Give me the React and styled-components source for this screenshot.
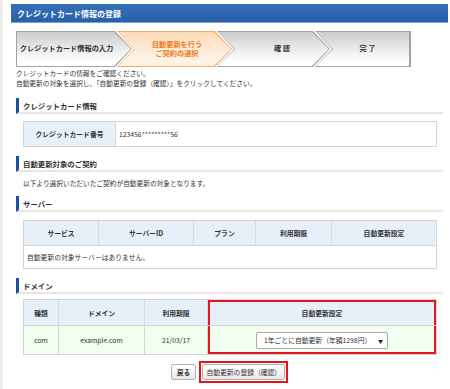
import React from "react";
import styled, { createGlobalStyle } from "styled-components";

const GlobalStyle = createGlobalStyle`
  html, body { margin: 0; padding: 0; }
  body {
    background: linear-gradient(to right, #ececec 0 3px, #fff 3px);
    font-family: "Noto Sans CJK JP", "Noto Sans", sans-serif;
    color: #333;
  }
`;

const Page = styled.div`
  width: 450px;
  height: 389px;
  box-sizing: border-box;
  padding: 4px 2px 0 11px;
  overflow: hidden;
`;

const TitleBar = styled.div`
  height: 19px;
  box-sizing: border-box;
  padding-left: 6px;
  display: flex;
  align-items: center;
  background: linear-gradient(#3670b9, #2760a8);
  border-bottom: 1px solid #78a3dc;
  color: #fff;
  font-size: 8px;
  font-weight: bold;
`;

const Content = styled.div`
  padding: 0 5px;
`;

const Stepper = styled.div`
  display: flex;
  width: 395px;
  height: 36px;
  margin-top: 8px;
`;

const shape = ({ $pos }) => {
  if ($pos === "first")
    return "polygon(0 0, calc(100% - 17px) 0, 100% 50%, calc(100% - 17px) 100%, 0 100%)";
  if ($pos === "last") return "polygon(0 0, 100% 0, 100% 100%, 0 100%, 17px 50%)";
  return "polygon(0 0, calc(100% - 17px) 0, 100% 50%, calc(100% - 17px) 100%, 0 100%, 17px 50%)";
};

const Step = styled.div`
  position: relative;
  flex: none;
  box-sizing: border-box;
  width: ${(p) => p.$w}px;
  margin-left: ${(p) => (p.$pos === "first" ? 0 : -15)}px;
  padding: 0 ${(p) => p.$pr}px 0 ${(p) => p.$pl}px;
  display: flex;
  align-items: center;
  justify-content: center;
  clip-path: ${shape};
  background: ${(p) => (p.$active ? "#f3ad66" : "#a2a2a2")};

  &::before {
    content: "";
    position: absolute;
    inset: 1px ${(p) => (p.$pos === "last" ? 2 : 1)}px 1px 1px;
    clip-path: ${shape};
    background: ${(p) =>
      p.$active
        ? "linear-gradient(#fcdcb9, #fff3e6 80%)"
        : "linear-gradient(#cdcdcd, #ffffff 85%)"};
  }
`;

const StepLabel = styled.span`
  position: relative;
  font-size: 7.2px;
  line-height: 9.5px;
  font-weight: bold;
  text-align: center;
  white-space: pre;
  color: ${(p) => (p.$active ? "#ef7a1c" : "#333")};
`;

const Intro = styled.p`
  margin: 1px 0 0;
  font-size: 6.7px;
  line-height: 10px;
`;

const Heading = styled.div`
  height: 14px;
  margin-top: ${(p) => p.$mt}px;
  display: flex;
  align-items: center;
  padding-left: 4px;
  border-left: 3px solid #1c4f9c;
  border-bottom: 2px solid #e6e6e6;
  font-size: 7.4px;
  font-weight: bold;
`;

const Note = styled.p`
  margin: 6px 0 0 7px;
  font-size: 6.7px;
  line-height: 10px;
`;

const Table = styled.table`
  width: 414px;
  margin: ${(p) => p.$mt}px 0 0 7px;
  table-layout: fixed;
  border-collapse: separate;
  border-spacing: 0;
  border-top: 1px solid #d4d4d4;
  border-left: 1px solid #d4d4d4;
  font-size: 6.8px;
`;

const Th = styled.th`
  height: ${(p) => p.$h || 24}px;
  padding: 0;
  border-right: 1px solid #d4d9e0;
  border-bottom: 1px solid #d4d4d4;
  background: #e7eff8;
  font-weight: bold;
  text-align: center;
  box-shadow: ${(p) =>
    p.$hl ? "inset 2px 2px 0 #e5151d, inset -2px 0 0 #e5151d" : "none"};
`;

const Td = styled.td`
  height: ${(p) => p.$h || 22}px;
  padding: ${(p) => (p.$left ? "0 0 0 3px" : "0")};
  border-right: 1px solid #d4d4d4;
  border-bottom: 1px solid #d4d4d4;
  background: ${(p) => (p.$green ? "#f1fdee" : "#fff")};
  text-align: ${(p) => (p.$left ? "left" : "center")};
  box-shadow: ${(p) =>
    p.$hl ? "inset 2px -2px 0 #e5151d, inset -2px 0 0 #e5151d" : "none"};
`;

const Select = styled.div`
  display: inline-flex;
  align-items: center;
  justify-content: space-between;
  box-sizing: border-box;
  width: 132px;
  height: 17px;
  padding: 0 4px 0 7px;
  border: 1px solid #a9a9a9;
  border-radius: 2px;
  background: #fff;
  font-size: 6.8px;
  vertical-align: middle;
`;

const Caret = styled.span`
  font-size: 5px;
  color: #222;
`;

const Actions = styled.div`
  display: flex;
  justify-content: center;
  align-items: center;
  gap: 3px;
  margin-top: 6px;
`;

const Highlight = styled.div`
  display: flex;
  padding: 1px;
  border: 2px solid #e5151d;
`;

const Button = styled.button`
  height: 16px;
  padding: 0 ${(p) => p.$px}px;
  border: 1px solid #b3b3b3;
  border-radius: 2px;
  background: linear-gradient(#ffffff, #e9e9e9);
  font-family: inherit;
  font-size: 6.8px;
  font-weight: ${(p) => (p.$bold ? "bold" : "normal")};
  color: #333;
  line-height: 1;
`;

const steps = [
  { label: "クレジットカード情報の入力", w: 116, pos: "first", pl: 2, pr: 17 },
  { label: "自動更新を行う\nご契約の選択", w: 115, pos: "mid", pl: 17, pr: 12, active: true },
  { label: "確 認", w: 113, pos: "mid", pl: 17, pr: 0 },
  { label: "完 了", w: 96, pos: "last", pl: 17, pr: 8 },
];

export default function App() {
  return (
    <Page>
      <GlobalStyle />
      <TitleBar>クレジットカード情報の登録</TitleBar>
      <Content>
        <Stepper>
          {steps.map((s) => (
            <Step key={s.label} $w={s.w} $pos={s.pos} $pl={s.pl} $pr={s.pr} $active={s.active}>
              <StepLabel $active={s.active}>{s.label}</StepLabel>
            </Step>
          ))}
        </Stepper>

        <Intro>
          クレジットカードの情報をご確認ください。
          <br />
          自動更新の対象を選択し、「自動更新の登録（確認）」をクリックしてください。
        </Intro>

        <Heading $mt={10}>クレジットカード情報</Heading>
        <Table $mt={7}>
          <colgroup>
            <col style={{ width: 92 }} />
            <col />
          </colgroup>
          <tbody>
            <tr>
              <Th $h={24}>クレジットカード番号</Th>
              <Td $h={24} $left>123456*********56</Td>
            </tr>
          </tbody>
        </Table>

        <Heading $mt={9}>自動更新対象のご契約</Heading>
        <Note>以下より選択いただいたご契約が自動更新の対象となります。</Note>

        <Heading $mt={8}>サーバー</Heading>
        <Table $mt={8}>
          <colgroup>
            <col style={{ width: 75 }} />
            <col style={{ width: 95 }} />
            <col style={{ width: 62 }} />
            <col style={{ width: 76 }} />
            <col />
          </colgroup>
          <thead>
            <tr>
              <Th>サービス</Th>
              <Th>サーバーID</Th>
              <Th>プラン</Th>
              <Th>利用期限</Th>
              <Th>自動更新設定</Th>
            </tr>
          </thead>
          <tbody>
            <tr>
              <Td colSpan={5} $left>自動更新の対象サーバーはありません。</Td>
            </tr>
          </tbody>
        </Table>

        <Heading $mt={9}>ドメイン</Heading>
        <Table $mt={5}>
          <colgroup>
            <col style={{ width: 35 }} />
            <col style={{ width: 86 }} />
            <col style={{ width: 63 }} />
            <col />
          </colgroup>
          <thead>
            <tr>
              <Th $h={25}>種類</Th>
              <Th $h={25}>ドメイン</Th>
              <Th $h={25}>利用期限</Th>
              <Th $h={25} $hl>自動更新設定</Th>
            </tr>
          </thead>
          <tbody>
            <tr>
              <Td $h={28} $green>com</Td>
              <Td $h={28} $green>example.com</Td>
              <Td $h={28} $green>21/03/17</Td>
              <Td $h={28} $green $hl>
                <Select>
                  <span>1年ごとに自動更新（年額1298円）</span>
                  <Caret>▼</Caret>
                </Select>
              </Td>
            </tr>
          </tbody>
        </Table>

        <Actions>
          <Button $px={5} $bold>戻る</Button>
          <Highlight>
            <Button $px={3}>自動更新の登録（確認）</Button>
          </Highlight>
        </Actions>
      </Content>
    </Page>
  );
}
